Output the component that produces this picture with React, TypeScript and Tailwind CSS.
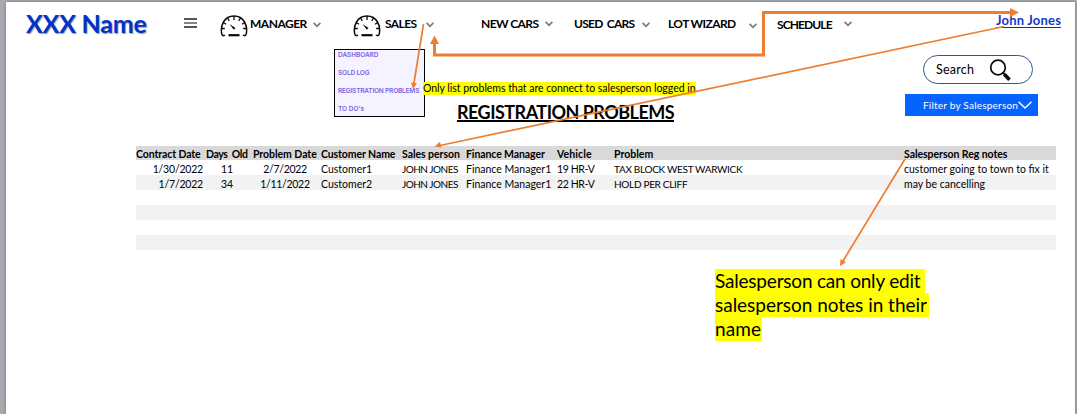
import React from "react";

function Chevron({ className = "" }: { className?: string }) {
  return (
    <svg viewBox="0 0 8 6" className={"h-[6px] w-[8px] shrink-0 " + className} fill="none" stroke="#7b7b7b" strokeWidth="1.7">
      <path d="M0.6 0.8 L4 4.3 L7.4 0.8" />
    </svg>
  );
}

function Gauge() {
  return (
    <svg viewBox="0 0 28 22" className="mt-[13px] h-[22px] w-[28px] shrink-0" fill="none" stroke="#0a0a0a" strokeWidth="1.5">
      <path d="M5 20 C3.4 21.2 2.2 20.6 1.8 19 C0 11 4 1 14 1 C24 1 28 11 26.2 19 C25.8 20.6 24.6 21.2 23 20" />
      <path d="M14 1 V5 M7.5 3 L9.3 6 M20.5 3 L18.7 6 M3.2 7.5 L6 9.3 M24.8 7.5 L22 9.3 M1.2 13.5 H4.8 M26.8 13.5 H23.2" strokeWidth="1.3" />
      <path d="M9.5 9 L15.5 13 L13.8 14.8 Z" fill="#0a0a0a" stroke="none" />
      <path d="M8.5 20.2 H19.5" strokeWidth="2.2" />
    </svg>
  );
}

const label = "shrink-0 whitespace-nowrap text-[12px] leading-4 font-bold text-black ";

function Header() {
  return (
    <header className="flex h-[47px] items-start">
      <div className="ml-[20px] mt-[6px] w-[158px] shrink-0 whitespace-nowrap text-[25px] leading-[30px] font-bold tracking-[-0.2px] text-[#0033cc] [text-shadow:1px_1px_1px_rgba(0,0,0,0.4)]">
        XXX Name
      </div>
      <div className="mt-[16px] flex w-[36px] shrink-0 flex-col gap-[2px]">
        <i className="h-[2px] w-[13px] bg-[#555]" />
        <i className="h-[2px] w-[13px] bg-[#858585]" />
        <i className="h-[2px] w-[13px] bg-[#555]" />
      </div>
      <Gauge />
      <div className={label + "ml-[2px] mt-[14px] w-[63px] tracking-[-0.5px]"}>MANAGER</div>
      <Chevron className="mt-[20px]" />
      <div className="w-[32px] shrink-0" />
      <Gauge />
      <div className={label + "ml-[4px] mt-[14px] w-[41px] tracking-[-0.6px]"}>SALES</div>
      <Chevron className="mt-[20px]" />
      <div className={label + "ml-[47px] mt-[14px] w-[64px] tracking-[-0.6px]"}>NEW CARS</div>
      <Chevron className="mt-[19px]" />
      <div className={label + "ml-[21px] mt-[14px] w-[68px] whitespace-pre tracking-[-0.75px]"}>{"USED  CARS"}</div>
      <Chevron className="mt-[20px]" />
      <div className={label + "ml-[18px] mt-[14px] w-[81px] tracking-[-0.6px]"}>LOT WIZARD</div>
      <Chevron className="mt-[21px]" />
      <div className={label + "ml-[20px] mt-[15px] w-[67px] tracking-[-0.9px]"}>SCHEDULE</div>
      <Chevron className="mt-[19px]" />
      <a className="ml-[144px] mt-[10px] h-[16px] w-[65px] shrink-0 whitespace-nowrap border-b border-[#0033cc] text-[13px] leading-4 font-bold tracking-[0.2px] text-[#1539c4]">
        John Jones
      </a>
    </header>
  );
}

function SalesMenu() {
  return (
    <nav className="ml-[328px] flex h-[68px] w-[91px] shrink-0 flex-col border border-black bg-[#f5f3ff] pl-[3px] pt-[1px] font-['Inter',sans-serif] text-[6.5px] leading-[9px] font-semibold whitespace-nowrap text-[#7a63e6]">
      <span className="h-[18px] tracking-[-0.05px]">DASHBOARD</span>
      <span className="h-[18px] tracking-[-0.15px]">SOLD LOG</span>
      <span className="h-[18px] tracking-[-0.18px]">REGISTRATION PROBLEMS</span>
      <span className="tracking-[0px]">TO DO's</span>
    </nav>
  );
}

function Toolbar() {
  return (
    <section className="flex h-[97px] items-start">
      <SalesMenu />
      <div className="-ml-[2px] w-[482px] shrink-0 pt-[33px]">
        <div className="h-[13px] w-[273px] whitespace-nowrap bg-[#ffff00] text-[10.5px] leading-[13px] tracking-[-0.03px] text-black">
          Only list problems that are connect to salesperson logged in
        </div>
        <h1 className="ml-[34px] mt-[8px] h-[19px] w-[217px] whitespace-nowrap border-b-2 border-black text-[18px] leading-[18px] font-bold tracking-[-0.52px] text-black">
          REGISTRATION PROBLEMS
        </h1>
      </div>
      <div className="w-[133px] shrink-0 pt-[6px]">
        <div className="ml-[18px] flex h-[29px] w-[110px] items-center rounded-full border border-[#2f5597] bg-white">
          <span className="ml-[12px] w-[51px] text-[12.5px] leading-4 tracking-[0.25px] text-black">Search</span>
          <svg viewBox="0 0 24 24" className="ml-[1px] h-[24px] w-[24px]" fill="none" stroke="#0a0a0a">
            <circle cx="10" cy="9.5" r="7.3" strokeWidth="1.7" />
            <path d="M15 14.5 L17 17" strokeWidth="2" />
            <path d="M16.3 16.2 L21.5 21.7" strokeWidth="3.6" />
          </svg>
        </div>
        <button className="mt-[10px] flex h-[22px] w-[133px] items-center bg-[#0563ff] text-left text-white">
          <span className="ml-[18px] w-[95px] whitespace-nowrap text-[10px] leading-3 tracking-[0.22px]">Filter by Salesperson</span>
          <svg viewBox="0 0 14 8" className="h-[8px] w-[14px] shrink-0" fill="none" stroke="white" strokeWidth="1.4">
            <path d="M0.5 0.8 L7 7 L13.5 0.8" />
          </svg>
        </button>
      </div>
    </section>
  );
}

const row = "grid h-[15px] grid-cols-[70px_47px_68px_81px_64px_91px_57px_290px_152px] whitespace-nowrap text-[10.5px] leading-[18px] text-black ";

const records = [
  ["1/30/2022", "11", "2/7/2022", "Customer1", "JOHN JONES", "Finance Manager1", "19 HR-V", "TAX BLOCK WEST WARWICK", "customer going to town to fix it"],
  ["1/7/2022", "34", "1/11/2022", "Customer2", "JOHN JONES", "Finance Manager1", "22 HR-V", "HOLD PER CLIFF", "may be cancelling"],
];

function Problems() {
  return (
    <section className="ml-[130px] w-[920px]">
      <div className="grid h-[14px] grid-cols-[70px_47px_68px_81px_64px_91px_57px_290px_152px] bg-[#d9d9d9] text-[10.5px] leading-[17px] font-bold whitespace-nowrap text-black">
        <span className="tracking-[-0.1px]">Contract Date</span>
        <span className="whitespace-pre tracking-[-0.4px]">{"Days  Old"}</span>
        <span className="tracking-[-0.05px]">Problem Date</span>
        <span className="tracking-[-0.1px]">Customer Name</span>
        <span className="tracking-[-0.05px]">Sales person</span>
        <span className="tracking-[-0.1px]">Finance Manager</span>
        <span className="tracking-[0.1px]">Vehicle</span>
        <span className="tracking-[0px]">Problem</span>
        <span className="tracking-[-0.05px]">Salesperson Reg notes</span>
      </div>
      {records.map((r, i) => (
        <div key={i} className={row + (i % 2 ? "bg-[#f2f2f2]" : "bg-white")}>
          <span className="pr-[3px] text-right tracking-[-0.2px]">{r[0]}</span>
          <span className="pr-[5px] text-center">{r[1]}</span>
          <span className="pr-[4px] text-center tracking-[-0.3px]">{r[2]}</span>
          <span>{r[3]}</span>
          <span className="text-[10px] tracking-[-0.5px]">{r[4]}</span>
          <span>{r[5]}</span>
          <span className="tracking-[-0.4px]">{r[6]}</span>
          <span className="text-[10px] tracking-[-0.3px]">{r[7]}</span>
          <span>{r[8]}</span>
        </div>
      ))}
      <div className="h-[15px]" />
      <div className="h-[15px] bg-[#f2f2f2]" />
      <div className="h-[15px]" />
      <div className="h-[15px] bg-[#f2f2f2]" />
    </section>
  );
}

function Arrows() {
  return (
    <svg viewBox="0 0 1077 414" className="pointer-events-none absolute top-0 left-0 h-[414px] w-[1077px]" fill="none" stroke="#ed7d31">
      <path d="M434.5 43 V55 H763.5 V12.5 H1011" strokeWidth="3" />
      <path d="M434.5 35.5 L439 44 H430 Z M1019 12.5 L1010 17 V8 Z" fill="#ed7d31" stroke="none" />
      <path d="M1004 26.5 L440 145.5" strokeWidth="1.7" />
      <path d="M434.5 146.5 L440 141.7 L441.3 147.5 Z" fill="#ed7d31" stroke="none" />
      <path d="M423.5 24 L413.8 84" strokeWidth="1.7" />
      <path d="M413 89 L411 82.5 L417 83.3 Z" fill="#ed7d31" stroke="none" />
      <path d="M905 159 L843 261" strokeWidth="1.7" />
      <path d="M840 266 L840.5 259 L846 262.3 Z" fill="#ed7d31" stroke="none" />
    </svg>
  );
}

export default function App() {
  return (
    <div className="relative h-[414px] w-[1077px] overflow-hidden bg-[#a7abb0] pt-[2px] pr-[2px] pl-[6px] font-['Lato','Liberation_Sans',sans-serif]">
      <main className="h-[412px] bg-white shadow-[0_0_3px_rgba(0,0,0,0.35)]">
        <Header />
        <Toolbar />
        <Problems />
        <div className="mt-[19px] ml-[709px] text-[19px] leading-[24px] whitespace-nowrap text-black">
          <div className="w-[210px] bg-[#ffff00] tracking-[-0.2px]">Salesperson can only edit</div>
          <div className="w-[214px] bg-[#ffff00] tracking-[-0.02px]">salesperson notes in their</div>
          <div className="w-[47px] bg-[#ffff00] tracking-[0.1px]">name</div>
        </div>
      </main>
      <Arrows />
    </div>
  );
}
